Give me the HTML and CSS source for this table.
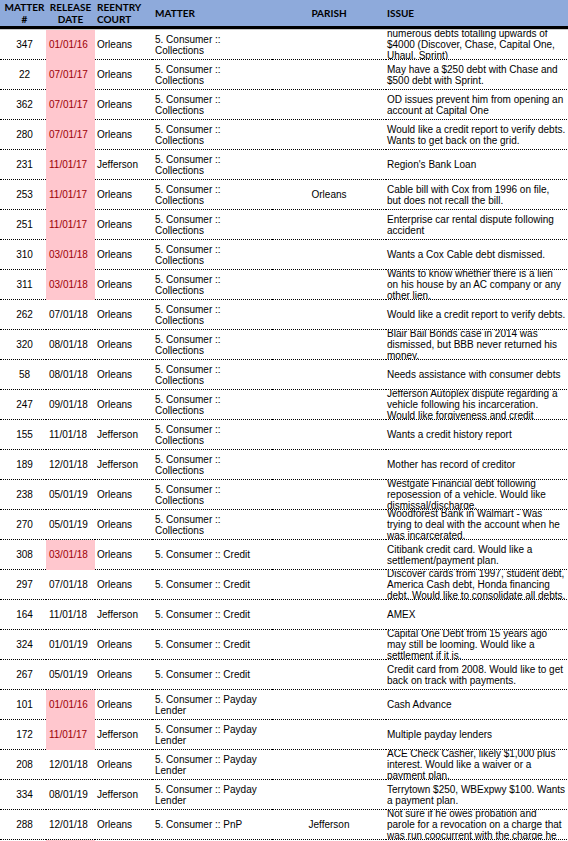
FILE: index.html
```html
<!DOCTYPE html>
<html lang="en">
<head>
<meta charset="utf-8">
<title>Consumer matters</title>
<link rel="stylesheet" href="styles.css">
</head>
<body>
<div class="sheet">
<table class="grid">
<colgroup>
<col class="w-num"><col class="w-date"><col class="w-court"><col class="w-matter"><col class="w-parish"><col class="w-issue">
</colgroup>
<thead>
<tr>
<th><div class="hc h-center">Matter<br>#</div></th>
<th><div class="hc h-center h-date">Release<br>Date</div></th>
<th><div class="hc h-court">Reentry<br>Court</div></th>
<th><div class="hc h-matter">Matter</div></th>
<th><div class="hc h-parish">Parish</div></th>
<th><div class="hc h-issue">Issue</div></th>
</tr>
</thead>
<tbody>
<tr><td><div class="cc num">347</div></td><td class="flag"><div class="cc date">01/01/16</div></td><td><div class="cc court">Orleans</div></td><td><div class="cc matter">5. Consumer :: Collections</div></td><td><div class="cc parish"></div></td><td><div class="cc issue">numerous debts totalling upwards of<br>$4000 (Discover, Chase, Capital One,<br>Uhaul, Sprint)</div></td></tr>
<tr><td><div class="cc num">22</div></td><td class="flag"><div class="cc date">07/01/17</div></td><td><div class="cc court">Orleans</div></td><td><div class="cc matter">5. Consumer :: Collections</div></td><td><div class="cc parish"></div></td><td><div class="cc issue">May have a $250 debt with Chase and<br>$500 debt with Sprint.</div></td></tr>
<tr><td><div class="cc num">362</div></td><td class="flag"><div class="cc date">07/01/17</div></td><td><div class="cc court">Orleans</div></td><td><div class="cc matter">5. Consumer :: Collections</div></td><td><div class="cc parish"></div></td><td><div class="cc issue">OD issues prevent him from opening an<br>account at Capital One</div></td></tr>
<tr><td><div class="cc num">280</div></td><td class="flag"><div class="cc date">07/01/17</div></td><td><div class="cc court">Orleans</div></td><td><div class="cc matter">5. Consumer :: Collections</div></td><td><div class="cc parish"></div></td><td><div class="cc issue">Would like a credit report to verify debts.<br>Wants to get back on the grid.</div></td></tr>
<tr><td><div class="cc num">231</div></td><td class="flag"><div class="cc date">11/01/17</div></td><td><div class="cc court">Jefferson</div></td><td><div class="cc matter">5. Consumer :: Collections</div></td><td><div class="cc parish"></div></td><td><div class="cc issue">Region's Bank Loan</div></td></tr>
<tr><td><div class="cc num">253</div></td><td class="flag"><div class="cc date">11/01/17</div></td><td><div class="cc court">Orleans</div></td><td><div class="cc matter">5. Consumer :: Collections</div></td><td><div class="cc parish">Orleans</div></td><td><div class="cc issue">Cable bill with Cox from 1996 on file,<br>but does not recall the bill.</div></td></tr>
<tr><td><div class="cc num">251</div></td><td class="flag"><div class="cc date">11/01/17</div></td><td><div class="cc court">Orleans</div></td><td><div class="cc matter">5. Consumer :: Collections</div></td><td><div class="cc parish"></div></td><td><div class="cc issue">Enterprise car rental dispute following<br>accident</div></td></tr>
<tr><td><div class="cc num">310</div></td><td class="flag"><div class="cc date">03/01/18</div></td><td><div class="cc court">Orleans</div></td><td><div class="cc matter">5. Consumer :: Collections</div></td><td><div class="cc parish"></div></td><td><div class="cc issue">Wants a Cox Cable debt dismissed.</div></td></tr>
<tr><td><div class="cc num">311</div></td><td class="flag"><div class="cc date">03/01/18</div></td><td><div class="cc court">Orleans</div></td><td><div class="cc matter">5. Consumer :: Collections</div></td><td><div class="cc parish"></div></td><td><div class="cc issue">Wants to know whether there is a lien<br>on his house by an AC company or any<br>other lien.</div></td></tr>
<tr><td><div class="cc num">262</div></td><td><div class="cc date">07/01/18</div></td><td><div class="cc court">Orleans</div></td><td><div class="cc matter">5. Consumer :: Collections</div></td><td><div class="cc parish"></div></td><td><div class="cc issue">Would like a credit report to verify debts.</div></td></tr>
<tr><td><div class="cc num">320</div></td><td><div class="cc date">08/01/18</div></td><td><div class="cc court">Orleans</div></td><td><div class="cc matter">5. Consumer :: Collections</div></td><td><div class="cc parish"></div></td><td><div class="cc issue">Blair Bail Bonds case in 2014 was<br>dismissed, but BBB never returned his<br>money.</div></td></tr>
<tr><td><div class="cc num">58</div></td><td><div class="cc date">08/01/18</div></td><td><div class="cc court">Orleans</div></td><td><div class="cc matter">5. Consumer :: Collections</div></td><td><div class="cc parish"></div></td><td><div class="cc issue">Needs assistance with consumer debts</div></td></tr>
<tr><td><div class="cc num">247</div></td><td><div class="cc date">09/01/18</div></td><td><div class="cc court">Orleans</div></td><td><div class="cc matter">5. Consumer :: Collections</div></td><td><div class="cc parish"></div></td><td><div class="cc issue">Jefferson Autoplex dispute regarding a<br>vehicle following his incarceration.<br>Would like forgiveness and credit</div></td></tr>
<tr><td><div class="cc num">155</div></td><td><div class="cc date">11/01/18</div></td><td><div class="cc court">Jefferson</div></td><td><div class="cc matter">5. Consumer :: Collections</div></td><td><div class="cc parish"></div></td><td><div class="cc issue">Wants a credit history report</div></td></tr>
<tr><td><div class="cc num">189</div></td><td><div class="cc date">12/01/18</div></td><td><div class="cc court">Jefferson</div></td><td><div class="cc matter">5. Consumer :: Collections</div></td><td><div class="cc parish"></div></td><td><div class="cc issue">Mother has record of creditor</div></td></tr>
<tr><td><div class="cc num">238</div></td><td><div class="cc date">05/01/19</div></td><td><div class="cc court">Orleans</div></td><td><div class="cc matter">5. Consumer :: Collections</div></td><td><div class="cc parish"></div></td><td><div class="cc issue">Westgate Financial debt following<br>reposession of a vehicle. Would like<br>dismissal/discharge.</div></td></tr>
<tr><td><div class="cc num">270</div></td><td><div class="cc date">05/01/19</div></td><td><div class="cc court">Orleans</div></td><td><div class="cc matter">5. Consumer :: Collections</div></td><td><div class="cc parish"></div></td><td><div class="cc issue">Woodforest Bank in Walmart - Was<br>trying to deal with the account when he<br>was incarcerated.</div></td></tr>
<tr><td><div class="cc num">308</div></td><td class="flag"><div class="cc date">03/01/18</div></td><td><div class="cc court">Orleans</div></td><td><div class="cc matter">5. Consumer :: Credit</div></td><td><div class="cc parish"></div></td><td><div class="cc issue">Citibank credit card. Would like a<br>settlement/payment plan.</div></td></tr>
<tr><td><div class="cc num">297</div></td><td><div class="cc date">07/01/18</div></td><td><div class="cc court">Orleans</div></td><td><div class="cc matter">5. Consumer :: Credit</div></td><td><div class="cc parish"></div></td><td><div class="cc issue">Discover cards from 1997, student debt,<br>America Cash debt, Honda financing<br>debt. Would like to consolidate all debts.</div></td></tr>
<tr><td><div class="cc num">164</div></td><td><div class="cc date">11/01/18</div></td><td><div class="cc court">Jefferson</div></td><td><div class="cc matter">5. Consumer :: Credit</div></td><td><div class="cc parish"></div></td><td><div class="cc issue">AMEX</div></td></tr>
<tr><td><div class="cc num">324</div></td><td><div class="cc date">01/01/19</div></td><td><div class="cc court">Orleans</div></td><td><div class="cc matter">5. Consumer :: Credit</div></td><td><div class="cc parish"></div></td><td><div class="cc issue">Capital One Debt from 15 years ago<br>may still be looming. Would like a<br>settlement if it is.</div></td></tr>
<tr><td><div class="cc num">267</div></td><td><div class="cc date">05/01/19</div></td><td><div class="cc court">Orleans</div></td><td><div class="cc matter">5. Consumer :: Credit</div></td><td><div class="cc parish"></div></td><td><div class="cc issue">Credit card from 2008. Would like to get<br>back on track with payments.</div></td></tr>
<tr><td><div class="cc num">101</div></td><td class="flag"><div class="cc date">01/01/16</div></td><td><div class="cc court">Orleans</div></td><td><div class="cc matter">5. Consumer :: Payday Lender</div></td><td><div class="cc parish"></div></td><td><div class="cc issue">Cash Advance</div></td></tr>
<tr><td><div class="cc num">172</div></td><td class="flag"><div class="cc date">11/01/17</div></td><td><div class="cc court">Jefferson</div></td><td><div class="cc matter">5. Consumer :: Payday Lender</div></td><td><div class="cc parish"></div></td><td><div class="cc issue">Multiple payday lenders</div></td></tr>
<tr><td><div class="cc num">208</div></td><td><div class="cc date">12/01/18</div></td><td><div class="cc court">Orleans</div></td><td><div class="cc matter">5. Consumer :: Payday Lender</div></td><td><div class="cc parish"></div></td><td><div class="cc issue">ACE Check Casher, likely $1,000 plus<br>interest. Would like a waiver or a<br>payment plan.</div></td></tr>
<tr><td><div class="cc num">334</div></td><td><div class="cc date">08/01/19</div></td><td><div class="cc court">Jefferson</div></td><td><div class="cc matter">5. Consumer :: Payday Lender</div></td><td><div class="cc parish"></div></td><td><div class="cc issue">Terrytown $250, WBExpwy $100. Wants<br>a payment plan.</div></td></tr>
<tr><td><div class="cc num">288</div></td><td><div class="cc date">12/01/18</div></td><td><div class="cc court">Orleans</div></td><td><div class="cc matter">5. Consumer :: PnP</div></td><td><div class="cc parish">Jefferson</div></td><td><div class="cc issue">Not sure if he owes probation and<br>parole for a revocation on a charge that<br>was run coocurrent with the charge he</div></td></tr>
<tr><td><div class="cc num">&nbsp;</div></td><td class="flag"><div class="cc date">&nbsp;</div></td><td><div class="cc court"></div></td><td><div class="cc matter"></div></td><td><div class="cc parish"></div></td><td><div class="cc issue"></div></td></tr>
</tbody>
</table>
</div>
</body>
</html>
```

FILE: styles.css
```css
* { box-sizing: border-box; }
html, body { margin: 0; padding: 0; background: #fff; }
.sheet { width: 568px; height: 841px; overflow: hidden; }
.grid {
  border-collapse: separate;
  border-spacing: 0;
  table-layout: fixed;
  width: 569px;
  font-family: "Liberation Sans", Arial, sans-serif;
  font-size: 10px;
  line-height: 11px;
  color: #000;
}
.w-num { width: 46px; }
.w-date { width: 49px; }
.w-court { width: 57px; }
.w-matter { width: 120px; }
.w-parish { width: 114px; }
.w-issue { width: 183px; }

.grid th {
  padding: 0;
  background: #8eaadb;
  border-bottom: 3px solid #000;
  font-family: Lato, "Open Sans", sans-serif;
  font-weight: 700;
  font-size: 10px;
  line-height: 12px;
  text-transform: uppercase;
  color: #000;
}
.hc { height: 26px; display: flex; flex-direction: column; justify-content: center; }
.h-center { text-align: center; padding-left: 3px; }
.h-date { padding-left: 0; }
.h-court { text-align: left; padding-left: 2px; }
.h-matter { text-align: left; padding-left: 3px; }
.h-parish { text-align: center; }
.h-issue { text-align: left; padding-left: 1px; }

.grid td { padding: 0; border-bottom: 1px dotted #000; vertical-align: top; }
.grid tbody tr:first-child td { border-top: 1px solid #c9c9c9; }
.cc { height: 29px; display: flex; flex-direction: column; justify-content: center; overflow: hidden; }
.num { text-align: center; padding-left: 3px; }
.date { padding-left: 3px; }
.court { padding-left: 2px; }
.matter { padding-left: 3px; padding-right: 4px; }
.parish { text-align: center; }
.issue { padding-left: 1px; white-space: nowrap; }
.grid td.flag { background: #ffc7ce; color: #9c0006; border-bottom: 1px solid #ffc7ce; }
```
